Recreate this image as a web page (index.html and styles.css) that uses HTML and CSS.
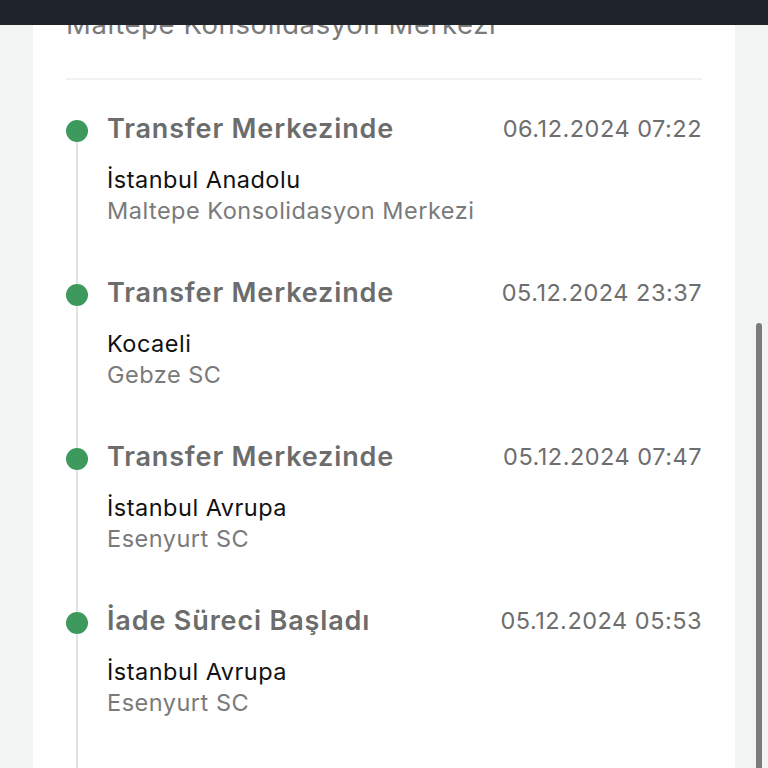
FILE: index.html
```html
<!DOCTYPE html>
<html lang="tr">
<head>
<meta charset="utf-8">
<title>Kargo Takip</title>
<link rel="stylesheet" href="styles.css">
</head>
<body>
<header class="topbar"></header>
<div class="viewport">
  <section class="card">
    <div class="card-head">
      <p class="head-sub">Maltepe Konsolidasyon Merkezi</p>
    </div>
    <ol class="timeline">
      <li class="event">
        <span class="dot"></span>
        <div class="event-body">
          <div class="event-row">
            <h3 class="event-title">Transfer Merkezinde</h3>
            <time class="event-date">06.12.2024 07:22</time>
          </div>
          <p class="event-city">İstanbul Anadolu</p>
          <p class="event-place">Maltepe Konsolidasyon Merkezi</p>
        </div>
      </li>
      <li class="event">
        <span class="dot"></span>
        <div class="event-body">
          <div class="event-row">
            <h3 class="event-title">Transfer Merkezinde</h3>
            <time class="event-date">05.12.2024 23:37</time>
          </div>
          <p class="event-city">Kocaeli</p>
          <p class="event-place">Gebze SC</p>
        </div>
      </li>
      <li class="event">
        <span class="dot"></span>
        <div class="event-body">
          <div class="event-row">
            <h3 class="event-title">Transfer Merkezinde</h3>
            <time class="event-date">05.12.2024 07:47</time>
          </div>
          <p class="event-city">İstanbul Avrupa</p>
          <p class="event-place">Esenyurt SC</p>
        </div>
      </li>
      <li class="event">
        <span class="dot"></span>
        <div class="event-body">
          <div class="event-row">
            <h3 class="event-title">İade Süreci Başladı</h3>
            <time class="event-date">05.12.2024 05:53</time>
          </div>
          <p class="event-city">İstanbul Avrupa</p>
          <p class="event-place">Esenyurt SC</p>
        </div>
      </li>
    </ol>
  </section>
  <div class="scroll-thumb"></div>
</div>
</body>
</html>
```
FILE: styles.css
```css
* { box-sizing: border-box; }
html, body { margin: 0; padding: 0; }
body {
  background: #f2f3f3;
  font-family: Inter, "Noto Sans", "DejaVu Sans", sans-serif;
  height: 768px;
  overflow: hidden;
}
.topbar {
  position: fixed;
  top: 0; left: 0; right: 0;
  height: 25px;
  background: #1f232a;
  z-index: 2;
}
.viewport {
  position: relative;
  height: 768px;
  overflow: hidden;
}
.card {
  margin: 0 33px 0 33px;
  background: #ffffff;
  padding: 8px 33px 0 33px;
  min-height: 800px;
}
.card-head {
  border-bottom: 2px solid #f1f1f1;
  padding-bottom: 37px;
}
.head-sub {
  margin: 0;
  font-size: 27.5px;
  line-height: 33px;
  letter-spacing: 0.6px;
  color: #7a7a7a;
}
.timeline {
  list-style: none;
  margin: 0;
  padding: 32px 0 0 0;
  position: relative;
}
.timeline::before {
  content: "";
  position: absolute;
  left: 10px;
  top: 50px;
  bottom: -200px;
  width: 2px;
  background: #e2e2e2;
}
.event {
  display: flex;
  gap: 19px;
  padding-bottom: 50px;
  position: relative;
}
.dot {
  flex: 0 0 22px;
  width: 22px;
  height: 22px;
  margin-top: 8px;
  border-radius: 50%;
  background: #3d9a5c;
  position: relative;
  z-index: 1;
}
.event-body { flex: 1; min-width: 0; }
.event-row {
  display: flex;
  justify-content: space-between;
  align-items: center;
  margin-bottom: 18px;
}
.event-title {
  margin: 0;
  font-size: 27px;
  line-height: 34px;
  font-weight: 600;
  letter-spacing: 0.85px;
  color: #6c6c6c;
}
.event-date {
  font-size: 23.5px;
  line-height: 34px;
  letter-spacing: 0.5px;
  color: #6e6e6e;
}
.event-city {
  margin: 0;
  font-size: 23.5px;
  line-height: 31px;
  letter-spacing: 0.5px;
  color: #111111;
}
.event-place {
  margin: 0;
  font-size: 23.5px;
  line-height: 31px;
  letter-spacing: 0.5px;
  color: #7a7a7a;
}
.scroll-thumb {
  position: absolute;
  left: 756px;
  top: 323px;
  width: 6px;
  height: 460px;
  border-radius: 3px;
  background: #7b7b7b;
}
```
